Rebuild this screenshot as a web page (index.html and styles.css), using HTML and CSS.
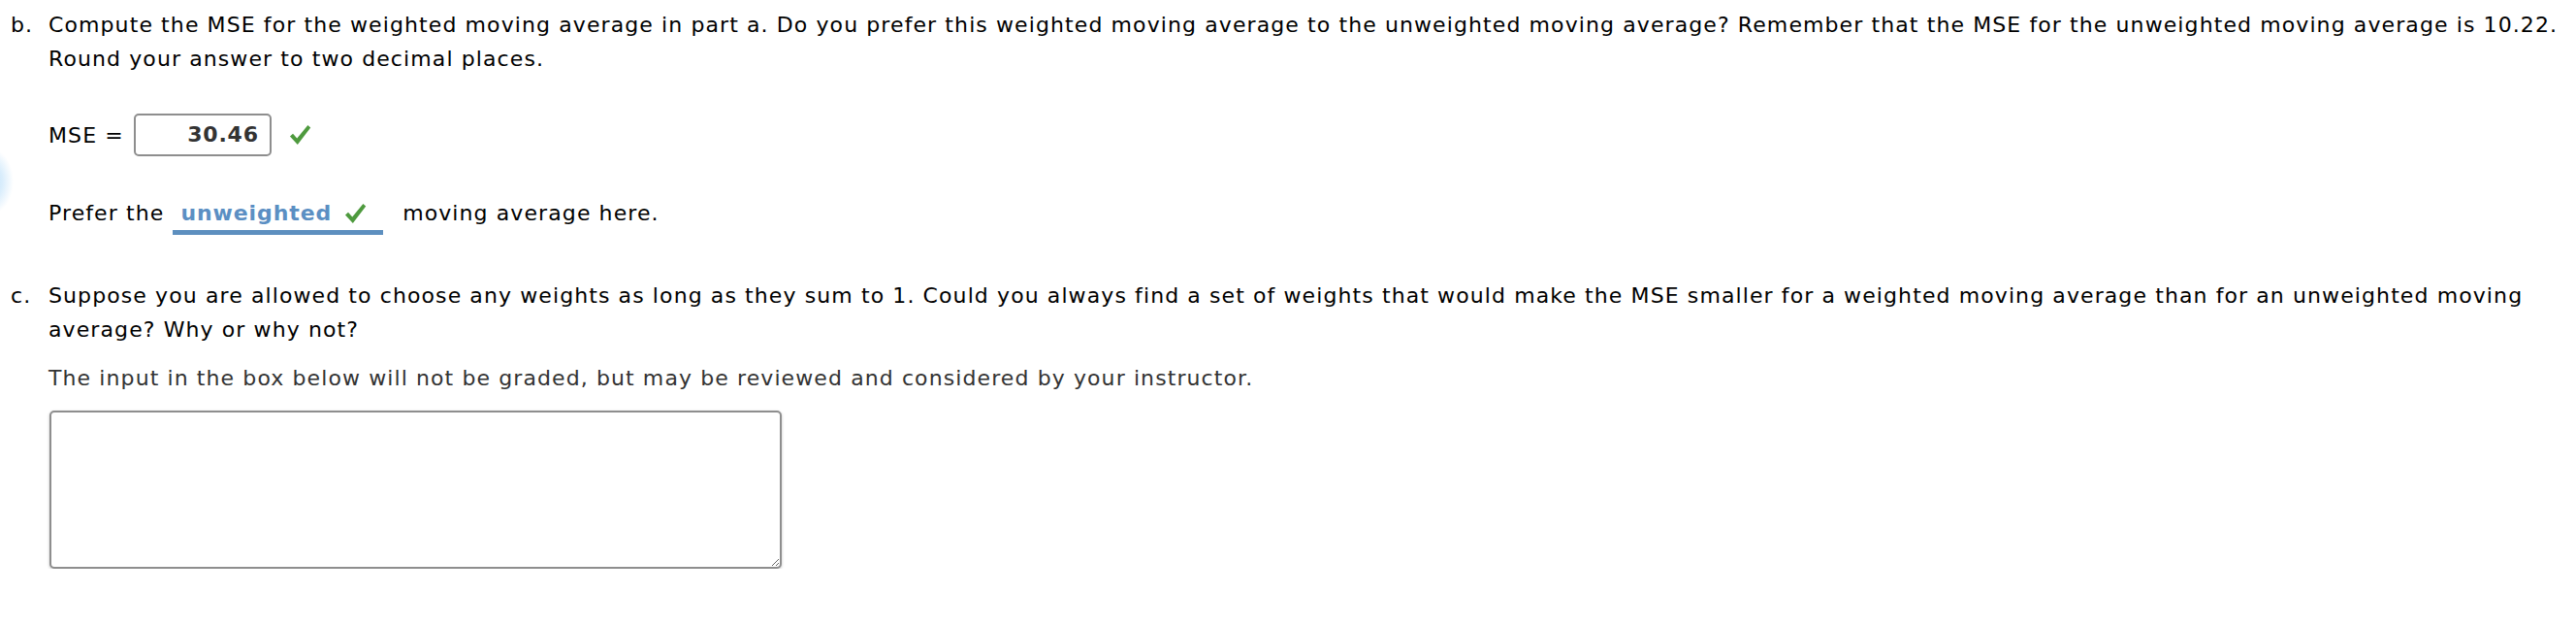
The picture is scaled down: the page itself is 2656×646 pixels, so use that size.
FILE: index.html
```html
<!DOCTYPE html>
<html>
<head>
<meta charset="utf-8">
<link rel="stylesheet" href="styles.css">
</head>
<body>
<div class="glow"></div>
<div class="page">
  <div class="part part-b">
    <span class="label">b.</span>
    <div class="content">
      <p class="question">Compute the MSE for the weighted moving average in part a. Do you prefer this weighted moving average to the unweighted moving average? Remember that the MSE for the unweighted moving average is 10.22. Round your answer to two decimal places.</p>
      <div class="mse-row">
        <span class="mse-label">MSE =</span>
        <span class="num-input">30.46</span>
        <svg class="check" viewBox="0 0 24 24" width="23" height="24"><path d="M1 13.6 L4.2 10.8 L8.6 15.6 L20.2 1.6 L23.2 4.2 L9.2 22.4 Z" fill="#4e9a3e"/></svg>
      </div>
      <div class="prefer-row">
        <span>Prefer the</span>
        <span class="dropdown"><span class="dd-value">unweighted</span><svg class="check small" viewBox="0 0 24 24" width="23" height="24"><path d="M1 13.6 L4.2 10.8 L8.6 15.6 L20.2 1.6 L23.2 4.2 L9.2 22.4 Z" fill="#4e9a3e"/></svg></span>
        <span>moving average here.</span>
      </div>
    </div>
  </div>
  <div class="part part-c">
    <span class="label">c.</span>
    <div class="content">
      <p class="question">Suppose you are allowed to choose any weights as long as they sum to 1. Could you always find a set of weights that would make the MSE smaller for a weighted moving average than for an unweighted moving average? Why or why not?</p>
      <p class="note">The input in the box below will not be graded, but may be reviewed and considered by your instructor.</p>
      <textarea class="essay"></textarea>
    </div>
  </div>
</div>
</body>
</html>
```
FILE: styles.css
```css
html, body {
  margin: 0;
  padding: 0;
  background: #fff;
}
body {
  font-family: "DejaVu Sans", Verdana, sans-serif;
  font-size: 22px;
  line-height: 35px;
  letter-spacing: 1.1px;
  color: #000;
  position: relative;
  overflow: hidden;
}
.glow {
  position: absolute;
  left: -38px;
  top: 152px;
  width: 52px;
  height: 70px;
  border-radius: 50%;
  background: radial-gradient(closest-side, #bfe0fa 0%, #d9edfc 55%, rgba(235,246,255,0) 100%);
}
.page {
  padding: 8px 14px 0 11px;
}
.part {
  display: flex;
}
.label {
  flex: 0 0 39px;
}
.content {
  flex: 1;
  min-width: 0;
}
.question, .note {
  margin: 0;
}
.mse-row {
  display: flex;
  align-items: center;
  margin-top: 39px;
  height: 44px;
}
.mse-label {
  margin-right: 10px;
}
.num-input {
  box-sizing: border-box;
  width: 142px;
  height: 44px;
  border: 2px solid #8e8e8e;
  border-radius: 5px;
  text-align: right;
  padding-right: 11px;
  font-weight: bold;
  color: #333;
  line-height: 40px;
  letter-spacing: 0.8px;
}
.check {
  display: block;
  margin-left: 18px;
}
.prefer-row {
  display: flex;
  align-items: baseline;
  margin-top: 41px;
}
.dropdown {
  display: inline-flex;
  align-items: baseline;
  height: 35px;
  border-bottom: 5px solid #5d8fbf;
  margin: 0 20px 0 9px;
  padding: 0 17px 0 8px;
}
.dd-value {
  color: #5b8fc3;
  font-weight: bold;
  letter-spacing: 0.9px;
}
.check.small {
  margin-left: 13px;
  align-self: center;
}
.part-c {
  margin-top: 45px;
}
.note {
  margin-top: 15px;
  color: #333;
}
.essay {
  display: block;
  box-sizing: border-box;
  margin: 16px 0 0 1px;
  width: 755px;
  height: 163px;
  border: 2px solid #8e8e8e;
  border-radius: 5px;
  box-shadow: 0 1px 3px rgba(0,0,0,0.25);
  background: #fff;
  font-family: inherit;
}
```
